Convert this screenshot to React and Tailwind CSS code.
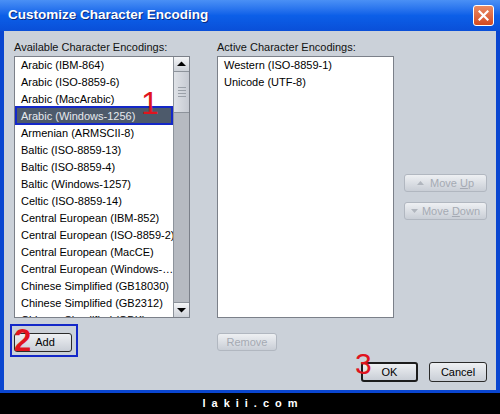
const available = [
  "Arabic (IBM-864)",
  "Arabic (ISO-8859-6)",
  "Arabic (MacArabic)",
  "Arabic (Windows-1256)",
  "Armenian (ARMSCII-8)",
  "Baltic (ISO-8859-13)",
  "Baltic (ISO-8859-4)",
  "Baltic (Windows-1257)",
  "Celtic (ISO-8859-14)",
  "Central European (IBM-852)",
  "Central European (ISO-8859-2)",
  "Central European (MacCE)",
  "Central European (Windows-…",
  "Chinese Simplified (GB18030)",
  "Chinese Simplified (GB2312)",
  "Chinese Simplified (GBK)",
];

const active = ["Western (ISO-8859-1)", "Unicode (UTF-8)"];

function Arrow({ down }) {
  return (
    <svg width="9" height="6" viewBox="0 0 9 6">
      {down ? <path d="M0 1h9L4.5 5.5z" fill="#000" /> : <path d="M0 5h9L4.5 0.5z" fill="#000" />}
    </svg>
  );
}

function Btn({ children, disabled, strong, className = "" }) {
  return (
    <div
      className={`flex items-center justify-center rounded-[3px] bg-gradient-to-b from-[#eef0f3] to-[#c9ced6] ${
        disabled
          ? "border border-[#b1b7c0] text-[#a5aab3]"
          : strong
          ? "border-2 border-[#1c1c1c] text-black"
          : "border border-[#2a2a2a] text-black"
      } ${className}`}
    >
      {children}
    </div>
  );
}

export default function App() {
  return (
    <div
      className="w-[500px] h-[414px] flex flex-col bg-black overflow-hidden relative"
      style={{ fontFamily: '"Liberation Sans", Arial, sans-serif' }}
    >
      {/* title bar */}
      <div className="h-[31px] shrink-0 flex items-center justify-between pl-[8px] pr-[6px] bg-gradient-to-b from-[#4a90f5] via-[#0c5fe8] to-[#0a4fd8]">
        <span className="text-white font-bold text-[13.5px] [text-shadow:1px_1px_0_#0a2a80]">
          Customize Character Encoding
        </span>
        <div className="w-[21px] h-[21px] rounded-[3px] border border-white bg-gradient-to-b from-[#e98a63] to-[#d4491f] flex items-center justify-center">
          <svg width="11" height="11" viewBox="0 0 11 11">
            <path d="M1.5 1.5l8 8M9.5 1.5l-8 8" stroke="#fff" strokeWidth="2.2" strokeLinecap="square" />
          </svg>
        </div>
      </div>

      {/* window body */}
      <div className="h-[362px] shrink-0 bg-[#0a46d0] px-[4px] pb-[3px] flex">
        <div className="flex-1 bg-[#cbd1d9] relative text-[11px] text-black flex flex-col pl-[10px] pr-[9px] pt-[7px]">
          <div className="flex">
            {/* left column */}
            <div className="w-[176px] flex flex-col">
              <div className="h-[18px] leading-[18px] text-[#111]">Available Character Encodings:</div>
              <div className="h-[262px] border border-[#7b8089] bg-white flex overflow-hidden">
                <div className="flex-1 overflow-hidden">
                  {available.map((item, i) => (
                    <div
                      key={item}
                      className={`h-[17px] leading-[17px] pl-[6px] whitespace-nowrap ${
                        i === 3 ? "bg-[#4d5a6b] text-[#e6e9ee]" : ""
                      }`}
                    >
                      {item}
                    </div>
                  ))}
                </div>
                <div className="w-[16px] flex flex-col bg-[#b6bac1] border-l border-[#8d939b]">
                  <div className="h-[15px] flex items-center justify-center bg-gradient-to-b from-[#f4f5f7] to-[#cdd1d8] border-b border-[#8d939b]">
                    <Arrow />
                  </div>
                  <div className="h-[41px] bg-gradient-to-r from-[#dfe2e7] to-[#c6cad2] border-b border-[#8d939b] flex flex-col items-center justify-center gap-[2px]">
                    <div className="w-[8px] h-px bg-[#9aa0a8]" />
                    <div className="w-[8px] h-px bg-[#9aa0a8]" />
                    <div className="w-[8px] h-px bg-[#9aa0a8]" />
                    <div className="w-[8px] h-px bg-[#9aa0a8]" />
                  </div>
                  <div className="flex-1" />
                  <div className="h-[15px] flex items-center justify-center bg-gradient-to-b from-[#f4f5f7] to-[#cdd1d8] border-t border-[#8d939b]">
                    <Arrow down />
                  </div>
                </div>
              </div>
              <Btn className="mt-[15px] w-[58px] h-[19px]">
                <span className="pl-[4px]">Add</span>
              </Btn>
            </div>

            {/* middle column */}
            <div className="w-[177px] ml-[27px] flex flex-col">
              <div className="h-[18px] leading-[18px] text-[#111]">Active Character Encodings:</div>
              <div className="h-[262px] border border-[#7b8089] bg-white">
                {active.map((item) => (
                  <div key={item} className="h-[17px] leading-[17px] pl-[6px] whitespace-nowrap">
                    {item}
                  </div>
                ))}
              </div>
              <Btn disabled className="mt-[15px] w-[60px] h-[18px]">
                Remove
              </Btn>
            </div>

            {/* right column */}
            <div className="flex-1 flex flex-col items-end pt-[136px]">
              <Btn disabled className="w-[83px] h-[18px] gap-[6px]">
                <svg width="7" height="4" viewBox="0 0 7 4">
                  <path d="M0 4h7L3.5 0z" fill="#b1b6be" />
                </svg>
                <span>
                  Move <span className="underline">U</span>p
                </span>
              </Btn>
              <Btn disabled className="mt-[10px] w-[83px] h-[18px] gap-[4px]">
                <svg width="7" height="4" viewBox="0 0 7 4">
                  <path d="M0 0h7L3.5 4z" fill="#b1b6be" />
                </svg>
                <span>
                  Move <span className="underline">D</span>own
                </span>
              </Btn>
            </div>
          </div>

          {/* OK / Cancel */}
          <div className="flex justify-end gap-[11px] mt-[10px]">
            <Btn strong className="w-[57px] h-[20px]">OK</Btn>
            <Btn className="w-[58px] h-[20px]">Cancel</Btn>
          </div>

          {/* annotations */}
          <div className="absolute left-[11px] top-[75px] w-[158px] h-[19px] border-2 border-[#1428c8]" />
          <div className="absolute left-[137px] top-[56px] text-[#e0141e] text-[32px] leading-none">1</div>
          <div className="absolute left-[6px] top-[293px] w-[68px] h-[33px] border-2 border-[#1428c8]" />
          <div className="absolute left-[10px] top-[294px] text-[#e0141e] text-[31px] leading-none font-bold">2</div>
          <div className="absolute left-[351px] top-[318px] text-[#e0141e] text-[30px] leading-none">3</div>
        </div>
      </div>

      {/* watermark strip */}
      <div className="flex-1 flex items-center justify-center">
        <span className="text-white font-bold text-[11px] tracking-[6px] pl-[6px]">lakii.com</span>
      </div>
    </div>
  );
}
